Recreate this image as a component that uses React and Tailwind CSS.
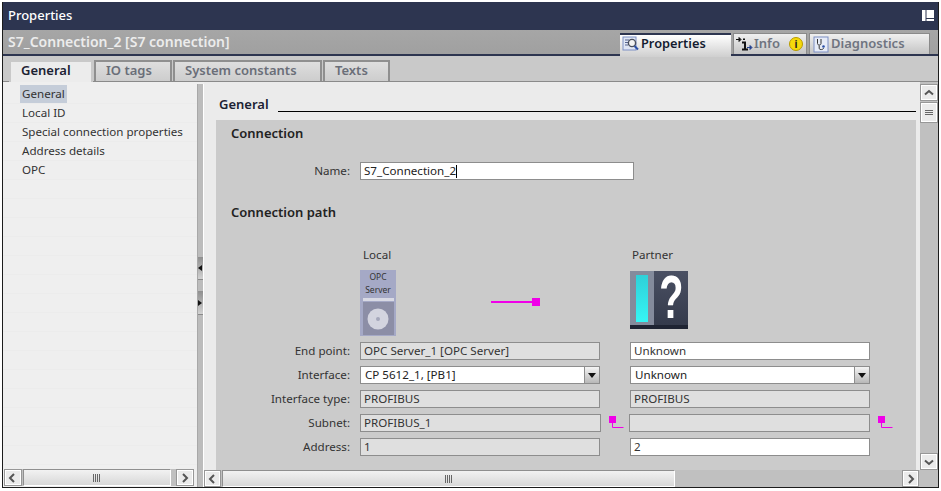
import React from "react";

function ScrollBtn({ dir, className = "" }) {
  const paths = {
    left: "M7 2 L3 6 L7 10",
    right: "M4 2 L8 6 L4 10",
    up: "M2 7.5 L6 4 L10 7.5",
    down: "M2 4.5 L6 8 L10 4.5",
  };
  return (
    <div className={"flex items-center justify-center bg-[#ebebeb] border border-[#979797] shadow-[inset_0_0_0_1px_#ffffff] " + className}>
      <svg width="12" height="12" viewBox="0 0 12 12">
        <path d={paths[dir]} fill="none" stroke="#555" strokeWidth="2" />
      </svg>
    </div>
  );
}

function Grip({ vertical }) {
  return vertical ? (
    <svg width="8" height="6" viewBox="0 0 8 6"><path d="M0 .5H8M0 2.5H8M0 4.5H8" stroke="#666" strokeWidth="1" /></svg>
  ) : (
    <svg width="8" height="8" viewBox="0 0 8 8"><path d="M.5 0V8M2.5 0V8M4.5 0V8M6.5 0V8" stroke="#666" strokeWidth="1" /></svg>
  );
}

function HScroll({ thumb, track, btn = "w-[18px]" }) {
  return (
    <div className="h-[17px] flex items-stretch bg-[#c0c0c0]">
      <ScrollBtn dir="left" className={btn} />
      <div className={"flex items-center justify-center ml-[1px] bg-gradient-to-b from-[#f2f2f2] to-[#d8d8d8] border border-[#8f8f8f] border-b-white border-r-white " + thumb}>
        <Grip />
      </div>
      <div className={track} />
      <ScrollBtn dir="right" className={btn} />
    </div>
  );
}

function PropertiesIcon() {
  return (
    <svg width="18" height="16" viewBox="0 0 18 16">
      <rect x="1" y="1" width="13" height="13" fill="#dfe6f5" stroke="#7d8fc4" />
      <path d="M3 4H7M3 6.5H6M3 9H6" stroke="#56648f" />
      <circle cx="10" cy="7" r="3.6" fill="#f3f3f3" stroke="#4a4f5c" strokeWidth="1.4" />
      <path d="M12.5 10 L16 13.5" stroke="#2b4fa6" strokeWidth="2" />
    </svg>
  );
}

function InfoIcon() {
  return (
    <svg width="18" height="17" viewBox="0 0 18 17">
      <path d="M1 3.5H4M4 1.5 L6 3.5 L4 5.5Z" fill="#111" stroke="#111" />
      <path d="M9 2.5V4" stroke="#111" strokeWidth="2" />
      <path d="M7 6.5H10V13M7 13.5H13" fill="none" stroke="#111" strokeWidth="2" />
      <path d="M12 11.5H15M15 9.5 L17 11.5 L15 13.5Z" fill="#23408f" stroke="#23408f" />
    </svg>
  );
}

function DiagIcon() {
  return (
    <svg width="16" height="17" viewBox="0 0 16 17">
      <rect x="1" y="1" width="14" height="15" fill="#e6ebf7" stroke="#7d8fc4" />
      <path d="M4.5 3V7.5C4.5 9.5 8 9.5 8 7.5V3M6.2 9.5V12.5C6.2 14 10.5 14 10.5 12" fill="none" stroke="#333" />
      <circle cx="10.5" cy="10.5" r="1.3" fill="#2b4fa6" />
    </svg>
  );
}

function TopTab({ icon, label, active, className, children }) {
  return active ? (
    <div className={"h-[24px] flex items-center pb-[4px] border-t-[2px] border-[#2d3550] bg-gradient-to-b from-[#ffffff] to-[#cfcfcf] text-[12.8px] font-semibold text-[#141c30] " + className}>
      {icon}
      <span>{label}</span>
    </div>
  ) : (
    <div className={"h-[21px] flex items-center border border-b-0 border-[#8a8a8a] bg-gradient-to-b from-[#f0f0f0] to-[#c4c4c4] text-[13px] font-semibold text-[#6f7480] " + className}>
      {icon}
      <span>{label}</span>
      {children}
    </div>
  );
}

function SubTab({ label, active, width }) {
  return active ? (
    <div className={"h-[22px] -mb-[1px] pl-[10px] pb-[2px] flex items-center bg-[#ececec] border-2 border-b-0 border-[#c9c9c9] text-[13px] font-semibold text-[#1c2233] " + width}>{label}</div>
  ) : (
    <div className={"h-[21px] pl-[10px] pb-[1px] flex items-center bg-gradient-to-b from-[#dedede] to-[#cdcdcd] border-2 border-b-0 border-[#8f8f8f] text-[13px] font-semibold text-[#6a6e78] " + width}>{label}</div>
  );
}

function Label({ children }) {
  return <div className="h-[18px] flex items-center justify-end text-[11.6px] text-[#333] pr-[10px]">{children}</div>;
}

function Field({ children, white, wide }) {
  return (
    <div className={"h-[18px] flex items-center pl-[3px] border border-[#8d8d8d] text-[11.6px] text-[#333] " + (white ? "bg-white " : "bg-[#dfdfdf] ") + (wide ? "w-[241px]" : "w-[240px]")}>
      {children}
    </div>
  );
}

function Select({ children }) {
  return (
    <div className="h-[18px] w-[240px] flex items-stretch border border-[#8d8d8d] bg-white text-[11.6px] text-[#222]">
      <div className="flex-1 flex items-center pl-[4px]">{children}</div>
      <div className="w-[15px] flex items-center justify-center bg-gradient-to-b from-[#f4f4f4] to-[#b8b8b8] border-l border-[#8d8d8d]">
        <svg width="8" height="5" viewBox="0 0 8 5"><path d="M0 0H8L4 5Z" fill="#111" /></svg>
      </div>
    </div>
  );
}

function SubnetPin({ className }) {
  return (
    <div className={"pt-[2px] " + className}>
      <svg width="16" height="14" viewBox="0 0 16 14">
        <rect x="0" y="0" width="7" height="7" fill="#f000e8" />
        <path d="M3.5 7V11.5H14.5" fill="none" stroke="#f000e8" strokeWidth="1" />
      </svg>
    </div>
  );
}

export default function App() {
  const navItems = ["General", "Local ID", "Special connection properties", "Address details", "OPC"];
  const rows = Array.from({ length: 20 }, (_, i) => navItems[i] || "");
  return (
    <div className="w-[941px] h-[491px] bg-white pt-[2px] pl-[2px] pr-[2px] pb-[3px] font-['Noto_Sans','Open_Sans',sans-serif]">
      <div className="w-[937px] h-[486px] flex flex-col border-x border-b border-[#1c1c1c] bg-[#c9c9c9] overflow-hidden">
        {/* Title bar */}
        <div className="h-[28px] shrink-0 flex items-center justify-between bg-[#2d3550] pl-[5px] pr-[4px]">
          <span className="text-[13px] font-medium text-white">Properties</span>
          <svg width="12" height="12" viewBox="0 0 12 12">
            <path d="M0 0H3.5V11H0ZM4.5 0H12V8H4.5ZM4.5 9H12V11H4.5Z" fill="#ffffff" />
          </svg>
        </div>
        {/* Object title + view tabs */}
        <div className="h-[26px] shrink-0 flex items-end justify-between bg-gradient-to-b from-[#a6a6a6] to-[#a0a0a0] border-b-[2px] border-[#2d3550] pl-[5px] pr-[8px]">
          <span className="text-[14px] font-semibold text-[#ececec] self-center pb-[1px]">S7_Connection_2 [S7 connection]</span>
          <div className="flex items-start gap-[2px] h-[26px] pt-[3px] relative top-[2px]">
            <TopTab active className="w-[111px] pl-[2px] gap-[1px]" icon={<PropertiesIcon />} label="Properties" />
            <TopTab className="w-[74px] pl-[1px] gap-[1px]" icon={<InfoIcon />} label="Info">
              <span className="ml-[8px] w-[14px] h-[14px] rounded-full bg-[#f5d90a] border border-[#b89b00] flex items-center justify-center text-[10px] font-bold text-[#222]">i</span>
            </TopTab>
            <TopTab className="w-[121px] pl-[3px] gap-[2px]" icon={<DiagIcon />} label="Diagnostics" />
          </div>
        </div>
        {/* Sub tabs */}
        <div className="h-[26px] shrink-0 flex items-end gap-[1px] bg-[#c9c9c9] border-b border-[#8a8a8a] pl-[6px]">
          <SubTab active label="General" width="w-[84px]" />
          <SubTab label="IO tags" width="w-[78px]" />
          <SubTab label="System constants" width="w-[149px]" />
          <SubTab label="Texts" width="w-[67px]" />
        </div>
        {/* Main */}
        <div className="flex-1 min-h-0 flex bg-[#efefef]">
          {/* Left nav */}
          <div className="w-[194px] shrink-0 flex flex-col">
            <div className="flex-1 min-h-0 overflow-hidden pt-[3px]">
              {rows.map((r, i) => (
                <div key={i} className="h-[19px] flex items-center pl-[19px] border-b border-[#ececec] text-[11.6px] text-[#333]">
                  <span className={i === 0 ? "bg-[#c5cdd9] px-[2px] -ml-[2px] h-[18px] flex items-center" : ""}>{r}</span>
                </div>
              ))}
            </div>
            <div className="pl-[1px] pr-[3px] pb-[1px] bg-[#efefef]">
              <HScroll thumb="w-[148px]" track="flex-1" btn="w-[18px]" />
            </div>
          </div>
          {/* Splitter */}
          <div className="w-[7px] shrink-0 mt-[2px] flex flex-col bg-[#bcbcbc] border-l border-[#a8a8a8] border-r border-r-white">
            <div className="h-[173px]" />
            <div className="h-[23px] flex items-center bg-gradient-to-b from-[#8f8f8f] to-[#d2d2d2] border-b border-[#8a8a8a]">
              <svg width="4" height="6" viewBox="0 0 4 6"><path d="M4 0V6L0 3Z" fill="#111" /></svg>
            </div>
            <div className="h-[11px]" />
            <div className="h-[24px] flex items-center bg-gradient-to-b from-[#8f8f8f] to-[#d2d2d2] border-b border-[#8a8a8a]">
              <svg width="4" height="6" viewBox="0 0 4 6"><path d="M0 0V6L4 3Z" fill="#111" /></svg>
            </div>
          </div>
          {/* Right */}
          <div className="flex-1 min-w-0 flex flex-col bg-[#ebebeb]">
            <div className="flex-1 min-h-0 flex">
              <div className="flex-1 min-w-0 overflow-hidden pl-[12px] pr-[4px]">
                <div className="h-[38px] flex items-end gap-[9px] pl-[3px] pb-[8px]">
                  <span className="text-[13px] font-semibold text-[#1c2233] leading-[16px]">General</span>
                  <div className="flex-1 h-[1px] bg-black" />
                </div>
                <div className="h-[400px] bg-[#cbcbcb] pl-[15px]">
                  <div className="pt-[4px] h-[42px] text-[13px] font-semibold text-[#222] leading-[18px]">Connection</div>
                  <div className="flex items-center ml-[-15px]">
                    <div className="w-[134px] text-right text-[11.6px] text-[#333]">Name:</div>
                    <div className="ml-[10px] w-[274px] h-[18px] flex items-center pl-[3px] border border-[#8d8d8d] bg-white text-[11.6px] text-[#222]">
                      S7_Connection_2<span className="inline-block w-[1px] h-[13px] bg-black" />
                    </div>
                  </div>
                  <div className="mt-[23px] text-[13px] font-semibold text-[#222] leading-[18px]">Connection path</div>
                  <div className="ml-[-15px] mt-[27px] flex pl-[144px] text-[11.6px] text-[#333] leading-[14px]">
                    <div className="w-[270px] pl-[3px]">Local</div>
                    <div className="pl-[2px]">Partner</div>
                  </div>
                  <div className="ml-[-15px] mt-[8px] h-[66px] flex pl-[144px]">
                    <div className="w-[36px] h-[66px] bg-[#a5a9c6] flex flex-col items-center">
                      <div className="text-[8.5px] leading-[13px] text-center text-[#333]">OPC<br />Server</div>
                      <div className="w-[31px] h-[3px] bg-[#d8d9e4] mt-[2px]" />
                      <div className="w-[31px] h-[33px] mt-[1px] bg-[#8c8ea6] flex items-center justify-center">
                        <svg width="22" height="22" viewBox="0 0 22 22">
                          <circle cx="11" cy="11" r="10.5" fill="#d3d4df" />
                          <circle cx="11" cy="11" r="2" fill="#a5a7bb" />
                        </svg>
                      </div>
                    </div>
                    <div className="w-[234px] pl-[95px] pt-[28px]">
                      <div className="flex items-center w-[49px]">
                        <div className="flex-1 h-[2px] bg-[#f000e8]" />
                        <div className="w-[8px] h-[8px] bg-[#f000e8]" />
                      </div>
                    </div>
                    <div className="w-[58px] h-[58px] mt-[1px] flex flex-col">
                      <div className="flex-1 flex">
                        <div className="w-[24px] bg-[#848b9c] flex justify-center pt-[4px] pb-[3px]">
                          <div className="w-[12px] bg-gradient-to-b from-[#2fd0d8] to-[#35f5f5]" />
                        </div>
                        <div className="flex-1 h-[54px] bg-gradient-to-b from-[#4a5063] to-[#353b4c] flex items-center justify-center pb-[2px] text-white text-[44px] font-bold leading-[50px] font-['Liberation_Sans',sans-serif]">
                          <span className="scale-x-[0.9] scale-y-[1.4]">?</span>
                        </div>
                      </div>
                      <div className="h-[4px] bg-[#1f2433]" />
                    </div>
                  </div>
                  <div className="ml-[-15px] mt-[6px] grid grid-cols-[144px_240px_30px_240px_30px] gap-y-[6px]">
                    <Label>End point:</Label>
                    <Field>OPC Server_1 [OPC Server]</Field>
                    <div />
                    <Field white>Unknown</Field>
                    <div />

                    <Label>Interface:</Label>
                    <Select>CP 5612_1, [PB1]</Select>
                    <div />
                    <Select>Unknown</Select>
                    <div />

                    <Label>Interface type:</Label>
                    <Field>PROFIBUS</Field>
                    <div />
                    <Field>PROFIBUS</Field>
                    <div />

                    <Label>Subnet:</Label>
                    <Field wide>PROFIBUS_1</Field>
                    <SubnetPin className="pl-[9px]" />
                    <div className="-ml-[1px]"><Field wide /></div>
                    <SubnetPin className="pl-[8px]" />

                    <Label>Address:</Label>
                    <Field>1</Field>
                    <div />
                    <Field white>2</Field>
                    <div />
                  </div>
                </div>
              </div>
              {/* Vertical scrollbar */}
              <div className="w-[18px] shrink-0 flex flex-col gap-[1px] bg-[#c0c0c0] pt-[2px]">
                <ScrollBtn dir="up" className="h-[17px]" />
                <div className="h-[21px] flex items-center justify-center bg-[#ebebeb] border border-[#979797] shadow-[inset_0_0_0_1px_#ffffff]">
                  <Grip vertical />
                </div>
                <div className="flex-1" />
                <ScrollBtn dir="down" className="h-[17px]" />
              </div>
            </div>
            {/* Bottom: horizontal scrollbar and corner */}
            <div className="flex">
              <div className="w-[715px]">
                <HScroll thumb="w-[453px]" track="flex-1" btn="w-[17px]" />
              </div>
              <div className="flex-1 bg-[#c0c0c0]" />
            </div>
          </div>
        </div>
      </div>
    </div>
  );
}
